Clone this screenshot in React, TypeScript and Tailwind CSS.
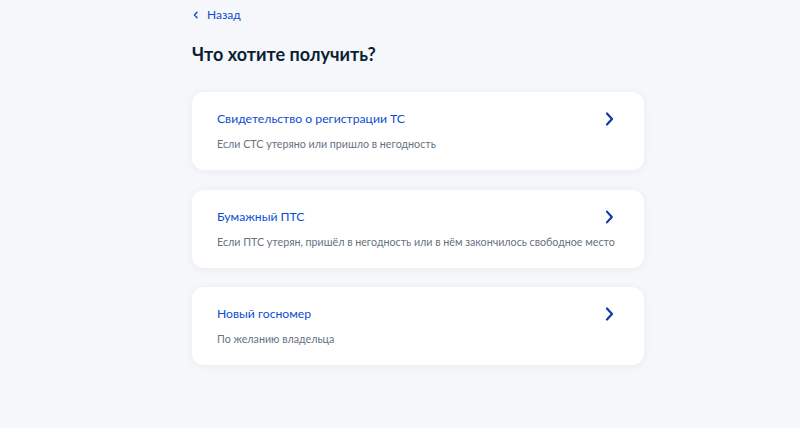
const options = [
  { title: "Свидетельство о регистрации ТС", hint: "Если СТС утеряно или пришло в негодность" },
  { title: "Бумажный ПТС", hint: "Если ПТС утерян, пришёл в негодность или в нём закончилось свободное место" },
  { title: "Новый госномер", hint: "По желанию владельца" },
];

function Chevron({ className }: { className?: string }) {
  return (
    <svg width="9" height="14" viewBox="0 0 9 14" fill="none" className={className}>
      <path d="M2 1.5L7 7l-5 5.5" stroke="currentColor" strokeWidth="2.2" strokeLinecap="round" strokeLinejoin="round" />
    </svg>
  );
}

export default function App() {
  return (
    <div className="min-h-[428px] w-full bg-[#f5f7fa]" style={{ fontFamily: "Lato, 'Noto Sans', sans-serif" }}>
      <div className="ml-[192px] w-[452px] pt-[7px]">
        {/* Back */}
        <a href="#" className="flex h-[16px] items-center gap-[8px] text-[12px] leading-[16px] text-[#0d4cd3]">
          <svg width="6" height="8" viewBox="0 0 6 8" fill="none" className="ml-[1px]">
            <path d="M4 1.3L1.5 4 4 6.7" stroke="currentColor" strokeWidth="1.4" strokeLinecap="round" strokeLinejoin="round" />
          </svg>
          Назад
        </a>

        <h1 className="mt-[19px] text-[18px] font-bold leading-[24px] text-[#0b1f33]">Что хотите получить?</h1>

        <div className="mt-[26px] flex flex-col gap-[19.5px]">
          {options.map(o => (
            <div
              key={o.title}
              className="flex h-[78px] cursor-pointer items-start justify-between rounded-[12px] bg-white pl-[25px] pr-[30px] pt-[19px] shadow-[0_1px_8px_rgba(30,50,90,0.06)]"
            >
              <div className="min-w-0 whitespace-nowrap">
                <p className="text-[12.2px] leading-[16px] text-[#0d4cd3]">{o.title}</p>
                <p className="mt-[10px] text-[10.7px] leading-[14px] text-[#66727f]">{o.hint}</p>
              </div>
              <Chevron className="mt-[1px] text-[#0d3aa6]" />
            </div>
          ))}
        </div>
      </div>
    </div>
  );
}
